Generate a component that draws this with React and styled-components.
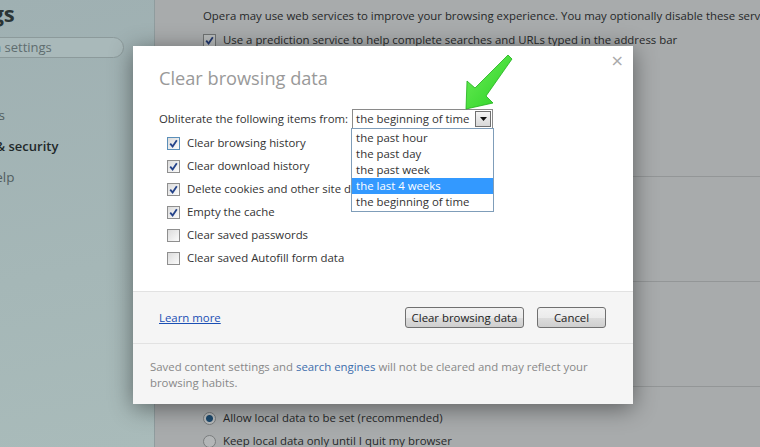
import React from 'react'
import styled, { createGlobalStyle } from 'styled-components'

const GlobalStyle = createGlobalStyle`
  html, body {
    margin: 0;
    padding: 0;
    width: 760px;
    height: 447px;
    overflow: hidden;
    font-family: "Open Sans", "Noto Sans", sans-serif;
  }
`

const Page = styled.div`
  position: relative;
  width: 760px;
  height: 447px;
  display: flex;
  overflow: hidden;
`

const Sidebar = styled.aside`
  width: 154px;
  flex: none;
  background: linear-gradient(170deg, #9fb0b2 0%, #a5b7b7 60%, #a9bbba 100%);
  border-right: 1px solid #8f9c9e;
  overflow: hidden;
`

const SideInner = styled.div`
  margin-left: -74px;
  display: flex;
  flex-direction: column;
`

const SideTitle = styled.div`
  font-size: 22px;
  font-weight: 700;
  color: #2b3536;
  line-height: 24px;
  margin-top: 1px;
`

const SearchPill = styled.div`
  margin-top: 12px;
  margin-left: 18px;
  width: 163px;
  height: 19px;
  border: 1px solid #8c9a9b;
  border-radius: 11px;
  background: #a9b9ba;
  font-size: 13px;
  color: #5f6d6f;
  line-height: 19px;
  padding-left: 15px;
  box-sizing: content-box;
`

const SideNav = styled.nav`
  margin-top: 47px;
  margin-left: 22px;
  display: flex;
  flex-direction: column;
  gap: 11px;
`

const SideItem = styled.div`
  font-size: ${({ active }) => (active ? 13 : 13.5)}px;
  line-height: 20px;
  color: ${({ active }) => (active ? '#1f2829' : '#525e60')};
  font-weight: ${({ active }) => (active ? 600 : 400)};
  margin-left: ${({ shift }) => shift || 0}px;
  white-space: nowrap;
`

const Main = styled.main`
  flex: 1;
  background: #a8abac;
  display: flex;
  flex-direction: column;
  color: #262829;
  font-size: 11.4px;
`

const Section = styled.section`
  height: ${({ h }) => h}px;
  flex: none;
  border-bottom: ${({ last }) => (last ? 'none' : '1px solid #939697')};
  padding: ${({ pt }) => pt || 0}px 0 0 48px;
  box-sizing: border-box;
  display: flex;
  flex-direction: column;
  gap: ${({ gap }) => gap || 0}px;
`

const BgText = styled.div`
  white-space: nowrap;
  line-height: 18px;
`

const BgRow = styled.div`
  display: flex;
  align-items: center;
  gap: 7px;
  white-space: nowrap;
  line-height: 18px;
`

const BgBox = styled.span`
  width: 11px;
  height: 11px;
  border: 1px solid #6f7272;
  background: #b7baba;
  display: flex;
  align-items: center;
  justify-content: center;
`

const Radio = styled.span`
  width: 11px;
  height: 11px;
  border-radius: 50%;
  border: 1px solid #7a7d7e;
  background: ${({ on }) => (on ? 'radial-gradient(circle, #1d4a6e 0 3px, #b8bbbc 4px)' : '#b3b6b7')};
`

const Overlay = styled.div`
  position: absolute;
  left: 133px;
  top: 46px;
  width: 500px;
  height: 358px;
  background: #ffffff;
  box-shadow: 0 4px 22px rgba(0, 0, 0, 0.45);
  display: flex;
  flex-direction: column;
  color: #333;
  font-size: 11.4px;
`

const Body = styled.div`
  height: 246px;
  padding: 20px 26px 0 26px;
  box-sizing: border-box;
  border-bottom: 1px solid #e2e2e2;
  position: relative;
`

const Close = styled.div`
  position: absolute;
  right: 9px;
  top: 5px;
  font-size: 16px;
  color: #aaaaaa;
  font-family: "DejaVu Sans", sans-serif;
`

const Title = styled.h1`
  margin: 0;
  font-size: 18.2px;
  font-weight: 400;
  color: #999999;
  line-height: 24px;
`

const FromRow = styled.div`
  display: flex;
  align-items: center;
  margin-top: 19px;
  gap: 4px;
  line-height: 18px;
`

const SelectWrap = styled.div`
  position: relative;
`

const SelectBox = styled.div`
  width: 141px;
  height: 20px;
  border: 1px solid #8a8a8a;
  display: flex;
  align-items: center;
  justify-content: space-between;
  padding-left: 3px;
  box-sizing: border-box;
  background: #fff;
`

const DropButton = styled.span`
  width: 14px;
  height: 14px;
  margin-right: 1px;
  border: 1px solid #707070;
  background: linear-gradient(#f4f4f4, #d8d8d8);
  display: flex;
  align-items: center;
  justify-content: center;
`

const List = styled.ul`
  position: absolute;
  left: -1px;
  top: 19px;
  width: 143px;
  box-sizing: border-box;
  margin: 0;
  padding: 1px 0;
  list-style: none;
  border: 1px solid #7f9db9;
  background: #fff;
  z-index: 2;
`

const Option = styled.li`
  height: 16px;
  line-height: 16px;
  padding-left: 4px;
  background: ${({ selected }) => (selected ? '#3399ff' : 'transparent')};
  color: ${({ selected }) => (selected ? '#fff' : '#333')};
`

const Checks = styled.div`
  margin-top: 5px;
  margin-left: 8px;
  display: flex;
  flex-direction: column;
  gap: 5px;
`

const CheckRow = styled.label`
  display: flex;
  align-items: center;
  gap: 7px;
  line-height: 18px;
  color: #333;
  white-space: nowrap;
`

const Box = styled.span`
  width: 11px;
  height: 11px;
  border: 1px solid ${({ focus }) => (focus ? '#5b8fb9' : '#8f8f8f')};
  background: linear-gradient(135deg, #dcdcdc, #fbfbfb);
  display: flex;
  align-items: center;
  justify-content: center;
`

const Footer = styled.div`
  height: 52px;
  background: #f5f5f5;
  border-bottom: 1px solid #e2e2e2;
  display: flex;
  align-items: center;
  padding: 0 27px 0 26px;
  box-sizing: border-box;
`

const Link = styled.a`
  color: #1a4fb4;
  text-decoration: underline;
  cursor: pointer;
`

const Spacer = styled.div`
  flex: 1;
`

const Button = styled.button`
  height: 21px;
  width: ${({ w }) => w}px;
  padding: 0;
  margin-left: ${({ gap }) => gap || 0}px;
  border: 1px solid #707070;
  border-radius: 3px;
  background: linear-gradient(#f2f2f2 0%, #ebebeb 50%, #dddddd 51%, #cfcfcf 100%);
  font-family: inherit;
  font-size: 11.4px;
  color: #222;
  line-height: 18px;
`

const Note = styled.div`
  flex: 1;
  background: #f5f5f5;
  padding: 15px 17px 0 17px;
  line-height: 16px;
  color: #888;
`

const NoteLink = styled.span`
  color: #3d6dac;
`

const Arrow = styled.svg`
  position: absolute;
  left: 455px;
  top: 50px;
  z-index: 3;
`

const Check = ({ color = '#24438a' }) => (
  <svg width="9" height="9" viewBox="0 0 9 9">
    <path d="M1.2 4.6 L3.6 7.4 L7.8 1.2" fill="none" stroke={color} strokeWidth="1.8" />
  </svg>
)

const options = [
  { label: 'the past hour' },
  { label: 'the past day' },
  { label: 'the past week' },
  { label: 'the last 4 weeks', selected: true },
  { label: 'the beginning of time' },
]

const items = [
  { label: 'Clear browsing history', checked: true, focus: true },
  { label: 'Clear download history', checked: true },
  { label: 'Delete cookies and other site data', checked: true },
  { label: 'Empty the cache', checked: true },
  { label: 'Clear saved passwords', checked: false },
  { label: 'Clear saved Autofill form data', checked: false },
]

function App() {
  return (
    <Page>
      <GlobalStyle />
      <Sidebar>
        <SideInner>
          <SideTitle>Settings</SideTitle>
          <SearchPill>Search settings</SearchPill>
          <SideNav>
            <SideItem shift={0}>Websites</SideItem>
            <SideItem active shift={-1}>Privacy &amp; security</SideItem>
            <SideItem shift={-4}>Opera help</SideItem>
          </SideNav>
        </SideInner>
      </Sidebar>
      <Main>
        <Section h={177} pt={7} gap={6}>
          <BgText>
            Opera may use web services to improve your browsing experience. You may optionally disable these services.
          </BgText>
          <BgRow>
            <BgBox><Check color="#22386e" /></BgBox>
            Use a prediction service to help complete searches and URLs typed in the address bar
          </BgRow>
        </Section>
        <Section h={105} />
        <Section h={105} />
        <Section h={60} pt={22} gap={5} last>
          <BgRow>
            <Radio on />
            Allow local data to be set (recommended)
          </BgRow>
          <BgRow>
            <Radio />
            Keep local data only until I quit my browser
          </BgRow>
        </Section>
      </Main>

      <Overlay>
        <Body>
          <Close>×</Close>
          <Title>Clear browsing data</Title>
          <FromRow>
            Obliterate the following items from:
            <SelectWrap>
              <SelectBox>
                the beginning of time
                <DropButton>
                  <svg width="7" height="4" viewBox="0 0 7 4">
                    <path d="M0 0 H7 L3.5 4 Z" fill="#111" />
                  </svg>
                </DropButton>
              </SelectBox>
              <List>
                {options.map(o => (
                  <Option key={o.label} selected={o.selected}>{o.label}</Option>
                ))}
              </List>
            </SelectWrap>
          </FromRow>
          <Checks>
            {items.map(item => (
              <CheckRow key={item.label}>
                <Box focus={item.focus}>{item.checked && <Check />}</Box>
                {item.label}
              </CheckRow>
            ))}
          </Checks>
        </Body>
        <Footer>
          <Link>Learn more</Link>
          <Spacer />
          <Button w={119}>Clear browsing data</Button>
          <Button w={69} gap={13}>Cancel</Button>
        </Footer>
        <Note>
          Saved content settings and <NoteLink>search engines</NoteLink> will not be cleared and may reflect your browsing habits.
        </Note>
      </Overlay>

      <Arrow width="62" height="64" viewBox="0 0 62 64">
        <defs>
          <linearGradient id="ag" x1="0" y1="0" x2="1" y2="1">
            <stop offset="0" stopColor="#6fee5a" />
            <stop offset="1" stopColor="#27d022" />
          </linearGradient>
        </defs>
        <path
          d="M11 59 L12 31 L20 38 L53 5 L57 9 L31 46 L38 53 Z"
          fill="url(#ag)"
          stroke="#1fb01b"
          strokeWidth="0.8"
          strokeLinejoin="round"
        />
      </Arrow>
    </Page>
  )
}

export default React.memo(App)
